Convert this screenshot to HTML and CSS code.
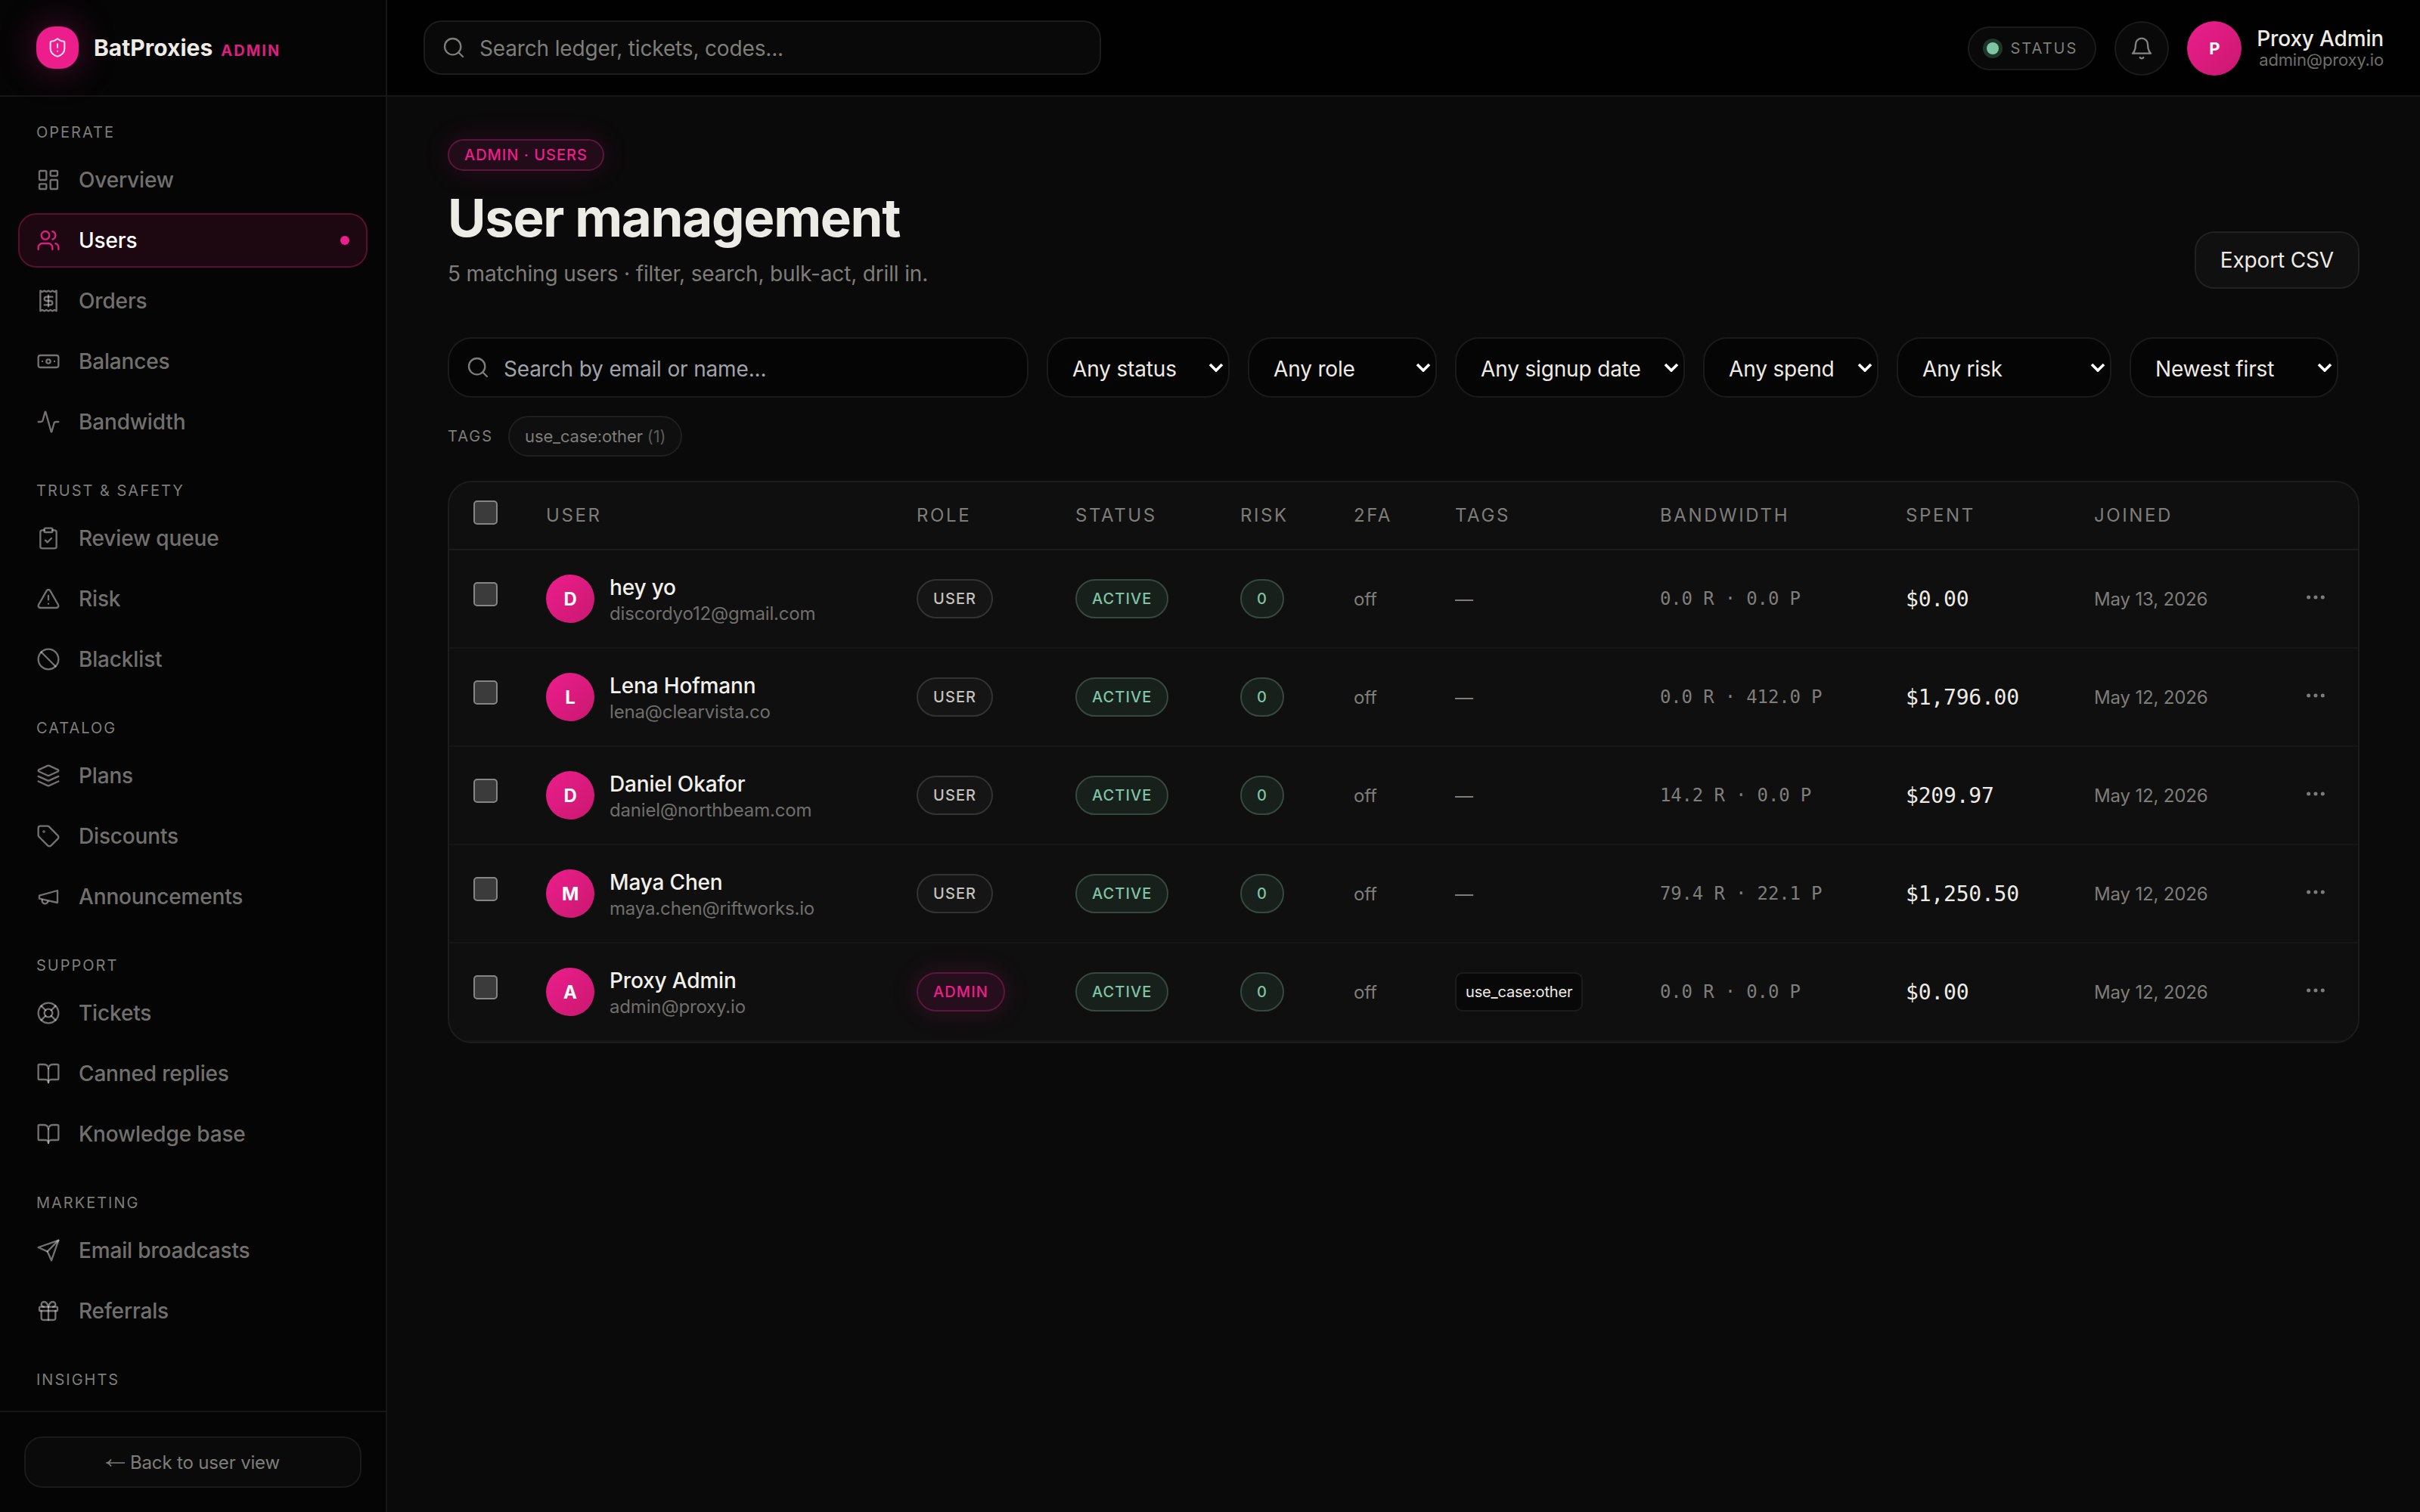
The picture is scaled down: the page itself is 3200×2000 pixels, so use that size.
FILE: index.html
```html
<!DOCTYPE html>
<html lang="en">

<head>
    <meta charset="UTF-8">
    <title>BatProxies Admin - Users</title>
    <link rel="stylesheet" href="styles.css">
</head>

<body>
    <!-- icon set -->
    <svg class="sprite" xmlns="http://www.w3.org/2000/svg">
        <symbol id="shield" viewBox="0 0 24 24"><path d="M20 13c0 5-3.5 7.5-7.66 8.95a1 1 0 0 1-.67-.01C7.5 20.5 4 18 4 13V6a1 1 0 0 1 1-1c2 0 4.5-1.2 6.24-2.72a1.17 1.17 0 0 1 1.52 0C14.51 3.81 17 5 19 5a1 1 0 0 1 1 1z"/><path d="M12 8v4"/><path d="M12 16h.01"/></symbol>
        <symbol id="overview" viewBox="0 0 24 24"><rect width="7" height="9" x="3" y="3" rx="1"/><rect width="7" height="5" x="14" y="3" rx="1"/><rect width="7" height="9" x="14" y="12" rx="1"/><rect width="7" height="5" x="3" y="16" rx="1"/></symbol>
        <symbol id="users" viewBox="0 0 24 24"><path d="M16 21v-2a4 4 0 0 0-4-4H6a4 4 0 0 0-4 4v2"/><circle cx="9" cy="7" r="4"/><path d="M22 21v-2a4 4 0 0 0-3-3.87"/><path d="M16 3.13a4 4 0 0 1 0 7.75"/></symbol>
        <symbol id="receipt" viewBox="0 0 24 24"><path d="M4 2v20l2-1 2 1 2-1 2 1 2-1 2 1 2-1 2 1V2l-2 1-2-1-2 1-2-1-2 1-2-1-2 1Z"/><path d="M16 8h-6a2 2 0 1 0 0 4h4a2 2 0 1 1 0 4H8"/><path d="M12 17.5v-11"/></symbol>
        <symbol id="banknote" viewBox="0 0 24 24"><rect width="20" height="12" x="2" y="6" rx="2"/><circle cx="12" cy="12" r="2"/><path d="M6 12h.01M18 12h.01"/></symbol>
        <symbol id="activity" viewBox="0 0 24 24"><path d="M22 12h-2.48a2 2 0 0 0-1.93 1.46l-2.35 8.36a.25.25 0 0 1-.48 0L9.24 2.18a.25.25 0 0 0-.48 0l-2.35 8.36A2 2 0 0 1 4.49 12H2"/></symbol>
        <symbol id="clipboard" viewBox="0 0 24 24"><rect width="8" height="4" x="8" y="2" rx="1"/><path d="M16 4h2a2 2 0 0 1 2 2v14a2 2 0 0 1-2 2H6a2 2 0 0 1-2-2V6a2 2 0 0 1 2-2h2"/><path d="m9 14 2 2 4-4"/></symbol>
        <symbol id="alert" viewBox="0 0 24 24"><path d="m21.73 18-8-14a2 2 0 0 0-3.48 0l-8 14A2 2 0 0 0 4 21h16a2 2 0 0 0 1.73-3"/><path d="M12 9v4"/><path d="M12 17h.01"/></symbol>
        <symbol id="ban" viewBox="0 0 24 24"><circle cx="12" cy="12" r="10"/><path d="m4.9 4.9 14.2 14.2"/></symbol>
        <symbol id="layers" viewBox="0 0 24 24"><path d="m12.83 2.18a2 2 0 0 0-1.66 0L2.6 6.08a1 1 0 0 0 0 1.83l8.58 3.91a2 2 0 0 0 1.66 0l8.58-3.9a1 1 0 0 0 0-1.83Z"/><path d="m22 17.65-9.17 4.16a2 2 0 0 1-1.66 0L2 17.65"/><path d="m22 12.65-9.17 4.16a2 2 0 0 1-1.66 0L2 12.65"/></symbol>
        <symbol id="tag" viewBox="0 0 24 24"><path d="M12.586 2.586A2 2 0 0 0 11.172 2H4a2 2 0 0 0-2 2v7.172a2 2 0 0 0 .586 1.414l8.704 8.704a2.426 2.426 0 0 0 3.42 0l6.58-6.58a2.426 2.426 0 0 0 0-3.42z"/><circle cx="7.5" cy="7.5" r=".5"/></symbol>
        <symbol id="megaphone" viewBox="0 0 24 24"><path d="m3 11 18-5v12L3 14v-3z"/><path d="M11.6 16.8a3 3 0 1 1-5.8-1.6"/></symbol>
        <symbol id="lifebuoy" viewBox="0 0 24 24"><circle cx="12" cy="12" r="10"/><path d="m4.93 4.93 4.24 4.24"/><path d="m14.83 9.17 4.24-4.24"/><path d="m14.83 14.83 4.24 4.24"/><path d="m9.17 14.83-4.24 4.24"/><circle cx="12" cy="12" r="4"/></symbol>
        <symbol id="book" viewBox="0 0 24 24"><path d="M12 7v14"/><path d="M3 18a1 1 0 0 1-1-1V4a1 1 0 0 1 1-1h5a4 4 0 0 1 4 4 4 4 0 0 1 4-4h5a1 1 0 0 1 1 1v13a1 1 0 0 1-1 1h-6a3 3 0 0 0-3 3 3 3 0 0 0-3-3z"/></symbol>
        <symbol id="send" viewBox="0 0 24 24"><path d="m22 2-7 20-4-9-9-4Z"/><path d="M22 2 11 13"/></symbol>
        <symbol id="gift" viewBox="0 0 24 24"><rect x="3" y="8" width="18" height="4" rx="1"/><path d="M12 8v13"/><path d="M19 12v7a2 2 0 0 1-2 2H7a2 2 0 0 1-2-2v-7"/><path d="M7.5 8a2.5 2.5 0 0 1 0-5A4.8 8 0 0 1 12 8a4.8 8 0 0 1 4.5-5 2.5 2.5 0 0 1 0 5"/></symbol>
        <symbol id="search" viewBox="0 0 24 24"><circle cx="11" cy="11" r="8"/><path d="m21 21-4.3-4.3"/></symbol>
        <symbol id="bell" viewBox="0 0 24 24"><path d="M6 8a6 6 0 0 1 12 0c0 7 3 9 3 9H3s3-2 3-9"/><path d="M10.3 21a1.94 1.94 0 0 0 3.4 0"/></symbol>
        <symbol id="more" viewBox="0 0 24 24"><circle cx="12" cy="12" r="1"/><circle cx="19" cy="12" r="1"/><circle cx="5" cy="12" r="1"/></symbol>
        <symbol id="chevron" viewBox="0 0 20 12"><path d="M2 2l8 8 8-8"/></symbol>
        <symbol id="arrow" viewBox="0 0 26 12"><path d="M25 6H2M7 1.5Q5 5 1.5 6Q5 7 7 10.5"/></symbol>
    </svg>

    <aside class="sidebar">
        <div class="brand">
            <div class="logo"><svg class="icon"><use href="#shield"/></svg></div>
            <div class="brand-text">
                <span class="brand-name">BatProxies</span>
                <span class="brand-role">ADMIN</span>
            </div>
        </div>

        <nav class="nav">
            <div class="nav-group">
                <p class="nav-label">OPERATE</p>
                <a class="nav-item"><svg class="icon"><use href="#overview"/></svg>Overview</a>
                <a class="nav-item active"><svg class="icon"><use href="#users"/></svg>Users<span class="nav-dot"></span></a>
                <a class="nav-item"><svg class="icon"><use href="#receipt"/></svg>Orders</a>
                <a class="nav-item"><svg class="icon"><use href="#banknote"/></svg>Balances</a>
                <a class="nav-item"><svg class="icon"><use href="#activity"/></svg>Bandwidth</a>
            </div>
            <div class="nav-group">
                <p class="nav-label">TRUST &amp; SAFETY</p>
                <a class="nav-item"><svg class="icon"><use href="#clipboard"/></svg>Review queue</a>
                <a class="nav-item"><svg class="icon"><use href="#alert"/></svg>Risk</a>
                <a class="nav-item"><svg class="icon"><use href="#ban"/></svg>Blacklist</a>
            </div>
            <div class="nav-group">
                <p class="nav-label">CATALOG</p>
                <a class="nav-item"><svg class="icon"><use href="#layers"/></svg>Plans</a>
                <a class="nav-item"><svg class="icon"><use href="#tag"/></svg>Discounts</a>
                <a class="nav-item"><svg class="icon"><use href="#megaphone"/></svg>Announcements</a>
            </div>
            <div class="nav-group">
                <p class="nav-label">SUPPORT</p>
                <a class="nav-item"><svg class="icon"><use href="#lifebuoy"/></svg>Tickets</a>
                <a class="nav-item"><svg class="icon"><use href="#book"/></svg>Canned replies</a>
                <a class="nav-item"><svg class="icon"><use href="#book"/></svg>Knowledge base</a>
            </div>
            <div class="nav-group">
                <p class="nav-label">MARKETING</p>
                <a class="nav-item"><svg class="icon"><use href="#send"/></svg>Email broadcasts</a>
                <a class="nav-item"><svg class="icon"><use href="#gift"/></svg>Referrals</a>
            </div>
            <div class="nav-group">
                <p class="nav-label">INSIGHTS</p>
            </div>
        </nav>

        <div class="sidebar-footer">
            <a class="back-btn"><svg class="arrow"><use href="#arrow"/></svg>Back to user view</a>
        </div>
    </aside>

    <div class="page">
        <header class="topbar">
            <div class="top-search"><svg class="icon"><use href="#search"/></svg><span>Search ledger, tickets, codes...</span></div>
            <div class="top-right">
                <div class="status"><span class="status-dot"></span>STATUS</div>
                <div class="bell"><svg class="icon"><use href="#bell"/></svg></div>
                <div class="avatar avatar-top">P</div>
                <div class="account">
                    <span class="account-name">Proxy Admin</span>
                    <span class="account-email">admin@proxy.io</span>
                </div>
            </div>
        </header>

        <main class="content">
            <div class="heading">
                <div>
                    <span class="eyebrow">ADMIN · USERS</span>
                    <h1>User management</h1>
                    <p class="subtitle">5 matching users · filter, search, bulk-act, drill in.</p>
                </div>
                <a class="export-btn">Export CSV</a>
            </div>

            <div class="filters">
                <div class="filter-search"><svg class="icon"><use href="#search"/></svg><span>Search by email or name...</span></div>
                <div class="select w-status"><span>Any status</span><svg class="chevron"><use href="#chevron"/></svg></div>
                <div class="select w-role"><span>Any role</span><svg class="chevron"><use href="#chevron"/></svg></div>
                <div class="select w-date"><span>Any signup date</span><svg class="chevron"><use href="#chevron"/></svg></div>
                <div class="select w-spend"><span>Any spend</span><svg class="chevron"><use href="#chevron"/></svg></div>
                <div class="select w-risk"><span>Any risk</span><svg class="chevron"><use href="#chevron"/></svg></div>
                <div class="select w-sort"><span>Newest first</span><svg class="chevron"><use href="#chevron"/></svg></div>
            </div>

            <div class="tags">
                <span class="tags-label">TAGS</span>
                <span class="tag-filter">use_case:other <span class="count">(1)</span></span>
            </div>

            <div class="card">
                <table>
                    <colgroup>
                        <col class="c-check"><col class="c-user"><col class="c-role"><col class="c-status"><col class="c-risk"><col class="c-2fa"><col class="c-tags"><col class="c-band"><col class="c-spent"><col class="c-joined"><col class="c-more">
                    </colgroup>
                    <thead>
                        <tr>
                            <th><span class="checkbox"></span></th>
                            <th>USER</th>
                            <th>ROLE</th>
                            <th>STATUS</th>
                            <th>RISK</th>
                            <th>2FA</th>
                            <th>TAGS</th>
                            <th>BANDWIDTH</th>
                            <th>SPENT</th>
                            <th>JOINED</th>
                            <th></th>
                        </tr>
                    </thead>
                    <tbody>
                        <tr>
                            <td><span class="checkbox"></span></td>
                            <td><div class="user"><div class="avatar">D</div><div class="who"><div class="name">hey yo</div><div class="email">discordyo12@gmail.com</div></div></div></td>
                            <td><span class="pill">USER</span></td>
                            <td><span class="pill green">ACTIVE</span></td>
                            <td><span class="pill green">0</span></td>
                            <td>off</td>
                            <td>—</td>
                            <td class="mono">0.0 R · 0.0 P</td>
                            <td class="mono spent">$0.00</td>
                            <td>May 13, 2026</td>
                            <td><div class="more"><svg class="icon"><use href="#more"/></svg></div></td>
                        </tr>
                        <tr>
                            <td><span class="checkbox"></span></td>
                            <td><div class="user"><div class="avatar">L</div><div class="who"><div class="name">Lena Hofmann</div><div class="email">lena@clearvista.co</div></div></div></td>
                            <td><span class="pill">USER</span></td>
                            <td><span class="pill green">ACTIVE</span></td>
                            <td><span class="pill green">0</span></td>
                            <td>off</td>
                            <td>—</td>
                            <td class="mono">0.0 R · 412.0 P</td>
                            <td class="mono spent">$1,796.00</td>
                            <td>May 12, 2026</td>
                            <td><div class="more"><svg class="icon"><use href="#more"/></svg></div></td>
                        </tr>
                        <tr>
                            <td><span class="checkbox"></span></td>
                            <td><div class="user"><div class="avatar">D</div><div class="who"><div class="name">Daniel Okafor</div><div class="email">daniel@northbeam.com</div></div></div></td>
                            <td><span class="pill">USER</span></td>
                            <td><span class="pill green">ACTIVE</span></td>
                            <td><span class="pill green">0</span></td>
                            <td>off</td>
                            <td>—</td>
                            <td class="mono">14.2 R · 0.0 P</td>
                            <td class="mono spent">$209.97</td>
                            <td>May 12, 2026</td>
                            <td><div class="more"><svg class="icon"><use href="#more"/></svg></div></td>
                        </tr>
                        <tr>
                            <td><span class="checkbox"></span></td>
                            <td><div class="user"><div class="avatar">M</div><div class="who"><div class="name">Maya Chen</div><div class="email">maya.chen@riftworks.io</div></div></div></td>
                            <td><span class="pill">USER</span></td>
                            <td><span class="pill green">ACTIVE</span></td>
                            <td><span class="pill green">0</span></td>
                            <td>off</td>
                            <td>—</td>
                            <td class="mono">79.4 R · 22.1 P</td>
                            <td class="mono spent">$1,250.50</td>
                            <td>May 12, 2026</td>
                            <td><div class="more"><svg class="icon"><use href="#more"/></svg></div></td>
                        </tr>
                        <tr>
                            <td><span class="checkbox"></span></td>
                            <td><div class="user"><div class="avatar">A</div><div class="who"><div class="name">Proxy Admin</div><div class="email">admin@proxy.io</div></div></div></td>
                            <td><span class="pill pink">ADMIN</span></td>
                            <td><span class="pill green">ACTIVE</span></td>
                            <td><span class="pill green">0</span></td>
                            <td>off</td>
                            <td><span class="chip">use_case:other</span></td>
                            <td class="mono">0.0 R · 0.0 P</td>
                            <td class="mono spent">$0.00</td>
                            <td>May 12, 2026</td>
                            <td><div class="more"><svg class="icon"><use href="#more"/></svg></div></td>
                        </tr>
                    </tbody>
                </table>
            </div>
        </main>
    </div>
</body>

</html>
```
FILE: styles.css
```css
* {
    box-sizing: border-box;
}

body {
    margin: 0;
    display: flex;
    width: 3200px;
    height: 2000px;
    overflow: hidden;
    background: #0a0a0a;
    color: #edebe6;
    font-family: Inter, sans-serif;
    font-size: 28px;
    letter-spacing: -0.16px;
}

h1,
p {
    margin: 0;
}

.sprite {
    display: none;
}

.icon {
    width: 32px;
    height: 32px;
    flex-shrink: 0;
    fill: none;
    stroke: currentColor;
    stroke-width: 1.75;
    stroke-linecap: round;
    stroke-linejoin: round;
}

/* sidebar */
.sidebar {
    width: 512px;
    flex-shrink: 0;
    display: flex;
    flex-direction: column;
    background: #050505;
    border-right: 2px solid #161616;
}

.brand {
    height: 128px;
    flex-shrink: 0;
    display: flex;
    align-items: center;
    gap: 20px;
    padding: 0 48px;
    border-bottom: 2px solid #161616;
}

.logo {
    width: 56px;
    height: 56px;
    display: flex;
    align-items: center;
    justify-content: center;
    border-radius: 24px;
    background: #ec1e8c;
    color: #fbdcee;
    box-shadow: 0 0 48px rgba(236, 30, 140, 0.35);
}

.logo .icon {
    width: 28px;
    height: 28px;
}

.brand-text {
    display: flex;
    align-items: baseline;
    gap: 11px;
}

.brand-name {
    font-size: 30px;
    font-weight: 700;
    letter-spacing: 0;
}

.brand-role {
    font-size: 20px;
    font-weight: 700;
    letter-spacing: 2px;
    color: #d9207f;
}

.nav {
    flex: 1;
    min-height: 0;
    overflow: hidden;
    display: flex;
    flex-direction: column;
    gap: 40px;
    padding: 32px 24px 0;
}

.nav-group {
    display: flex;
    flex-direction: column;
    gap: 8px;
}

.nav-label {
    margin-bottom: 4px;
    padding-left: 24px;
    font-size: 20px;
    line-height: 30px;
    letter-spacing: 2px;
    color: #7e7d7a;
}

.nav-item {
    height: 72px;
    display: flex;
    align-items: center;
    gap: 24px;
    padding: 0 22px;
    border: 2px solid transparent;
    border-radius: 24px;
    font-weight: 500;
    color: rgba(237, 235, 230, 0.48);
}

.nav-item.active {
    color: #fff;
    background: #1d0811;
    border-color: #57112f;
}

.nav-item.active .icon {
    color: #d9207f;
}

.nav-dot {
    width: 12px;
    height: 12px;
    margin-left: auto;
    border-radius: 50%;
    background: #ec1e8c;
}

.sidebar-footer {
    height: 134px;
    flex-shrink: 0;
    padding: 32px 32px 0;
    border-top: 2px solid #161616;
}

.back-btn {
    height: 68px;
    display: flex;
    align-items: center;
    justify-content: center;
    gap: 6px;
    border: 2px solid #1a1a1a;
    border-radius: 24px;
    background: #0a0a0a;
    font-size: 24px;
    color: #7e7d7a;
}

.arrow {
    width: 26px;
    height: 12px;
    margin-top: 2px;
    fill: none;
    stroke: currentColor;
    stroke-width: 1.7;
}

/* top bar */
.page {
    flex: 1;
    min-width: 0;
}

.topbar {
    height: 128px;
    display: flex;
    align-items: center;
    justify-content: space-between;
    padding: 0 48px;
    background: #010101;
    border-bottom: 2px solid #161616;
}

.top-search {
    width: 896px;
    height: 72px;
    display: flex;
    align-items: center;
    gap: 18px;
    padding: 0 22px;
    border: 2px solid #1c1c1c;
    border-radius: 24px;
    background: #090909;
    color: #7e7d7a;
}

.top-search span {
    padding-top: 2px;
}

.top-right {
    display: flex;
    align-items: center;
    gap: 24px;
    padding-top: 2px;
}

.status {
    height: 58px;
    display: flex;
    align-items: center;
    gap: 16px;
    padding: 0 23px;
    border: 2px solid #1a1a1a;
    border-radius: 29px;
    background: #090909;
    font-size: 20px;
    letter-spacing: 2px;
    color: #7e7d7a;
}

.status-dot {
    width: 16px;
    height: 16px;
    border-radius: 50%;
    background: #7fc4a4;
    box-shadow: 0 0 0 5px #1f3529;
}

.bell {
    width: 72px;
    height: 72px;
    display: flex;
    align-items: center;
    justify-content: center;
    border: 2px solid #1a1a1a;
    border-radius: 50%;
    background: #090909;
    color: rgba(237, 235, 230, 0.55);
}

.avatar {
    width: 64px;
    height: 64px;
    flex-shrink: 0;
    display: flex;
    align-items: center;
    justify-content: center;
    border-radius: 50%;
    background: linear-gradient(135deg, #ec1e8c, #c9186f);
    color: #fff;
    font-size: 24px;
    font-weight: 700;
}

.avatar-top {
    width: 72px;
    height: 72px;
    font-size: 22px;
}

.account {
    display: flex;
    flex-direction: column;
    align-items: flex-end;
    margin-left: -4px;
}

.account-name {
    font-weight: 500;
    line-height: 30px;
}

.account-email {
    font-size: 22px;
    line-height: 26px;
    color: #6f6e6c;
}

/* heading */
.content {
    padding: 56px 80px 0;
}

.heading {
    display: flex;
    align-items: flex-end;
    justify-content: space-between;
    height: 198px;
}

.eyebrow {
    display: inline-flex;
    align-items: center;
    height: 42px;
    padding: 0 20px;
    border: 2px solid #5c153d;
    border-radius: 21px;
    background: #220c19;
    box-shadow: 0 0 36px rgba(236, 30, 140, 0.15);
    font-size: 20px;
    font-weight: 500;
    letter-spacing: 1px;
    color: #ec1e8c;
}

h1 {
    margin-top: 20px;
    font-size: 69px;
    font-weight: 700;
    line-height: 84px;
    letter-spacing: -1.3px;
}

.subtitle {
    margin-top: 10px;
    margin-bottom: -2px;
    line-height: 44px;
    color: #7e7d7a;
}

.export-btn {
    height: 76px;
    display: flex;
    align-items: center;
    padding: 0 32px;
    border: 2px solid #212121;
    border-radius: 26px;
    background: #101010;
}

/* filters */
.filters {
    display: flex;
    gap: 24px;
    margin-top: 64px;
}

.filter-search,
.select {
    height: 80px;
    display: flex;
    align-items: center;
    border: 2px solid #1a1a1a;
    border-radius: 32px;
    background: #050505;
}

.filter-search {
    width: 768px;
    gap: 18px;
    padding: 0 22px;
    color: #a0a3aa;
}

.filter-search .icon {
    color: #7e7d7a;
}

.filter-search span,
.select span {
    padding-top: 4px;
}

.select {
    justify-content: space-between;
    padding: 0 6px 0 32px;
}

.chevron {
    width: 20px;
    height: 12px;
    fill: none;
    stroke: #fff;
    stroke-width: 3.6;
}

.w-status { width: 242px; }
.w-role { width: 250px; }
.w-date { width: 304px; }
.w-spend { width: 232px; }
.w-risk { width: 284px; }
.w-sort { width: 276px; }

.tags {
    display: flex;
    align-items: center;
    gap: 20px;
    margin-top: 24px;
}

.tags-label {
    font-size: 20px;
    letter-spacing: 2px;
    color: #7e7d7a;
}

.tag-filter {
    height: 54px;
    display: flex;
    align-items: center;
    gap: 6px;
    padding: 0 20px;
    border: 2px solid #1f1f1f;
    border-radius: 27px;
    background: #0f0f0f;
    font-size: 22px;
    color: #7e7d7a;
}

.tag-filter .count {
    color: #5a5957;
}

/* table */
.card {
    margin-top: 32px;
    border: 2px solid #1c1c1c;
    border-radius: 32px;
    background: #0f0f0f;
    overflow: hidden;
}

table {
    width: 100%;
    table-layout: fixed;
    border-collapse: separate;
    border-spacing: 0;
}

.c-check { width: 96px; }
.c-user { width: 490px; }
.c-role { width: 210px; }
.c-status { width: 218px; }
.c-risk { width: 150px; }
.c-2fa { width: 134px; }
.c-tags { width: 271px; }
.c-band { width: 325px; }
.c-spent { width: 249px; }
.c-joined { width: 269px; }
.c-more { width: 112px; }

th,
td {
    padding: 0 0 0 32px;
    text-align: left;
    vertical-align: middle;
    white-space: nowrap;
    font-size: 24px;
    color: #7e7d7a;
}

th {
    height: 90px;
    padding-bottom: 2px;
    border-bottom: 2px solid #1c1c1c;
    font-weight: 400;
    letter-spacing: 2.6px;
}

td {
    height: 130px;
    border-bottom: 2px solid #161616;
}

.checkbox {
    display: block;
    width: 32px;
    height: 32px;
    margin-bottom: 6px;
    border: 2px solid #858585;
    border-radius: 5px;
    background: #3b3b3b;
}

td .checkbox {
    margin-bottom: 12px;
}

.user {
    display: flex;
    align-items: center;
    gap: 20px;
}

.who {
    padding-top: 4px;
}

.name {
    font-size: 28px;
    font-weight: 500;
    line-height: 36px;
    color: #f2f0eb;
}

.email {
    line-height: 34px;
    color: #6f6e6c;
}

.pill {
    display: inline-flex;
    align-items: center;
    height: 52px;
    padding: 0 20px;
    border: 2px solid #333;
    border-radius: 26px;
    background: #151515;
    font-size: 20px;
    font-weight: 500;
    letter-spacing: 1.1px;
    color: #c4c2be;
    vertical-align: middle;
}

.pill.green {
    border-color: #36493f;
    background: #18201c;
    color: #7fc4a4;
}

.pill.pink {
    border-color: #5c153d;
    background: #260f1c;
    box-shadow: 0 0 36px rgba(236, 30, 140, 0.15);
    color: #ec1e8c;
}

.chip {
    display: inline-flex;
    align-items: center;
    height: 52px;
    padding: 0 12px;
    border: 2px solid #1c1c1c;
    border-radius: 10px;
    background: #080808;
    font-size: 20px;
    color: #edebe6;
    vertical-align: middle;
}

.mono {
    font-family: "DejaVu Sans Mono", monospace;
}

.spent {
    font-size: 28px;
    letter-spacing: -0.2px;
    color: #edebe6;
}

.more {
    width: 48px;
    display: flex;
    justify-content: center;
    margin-bottom: 4px;
}
```
